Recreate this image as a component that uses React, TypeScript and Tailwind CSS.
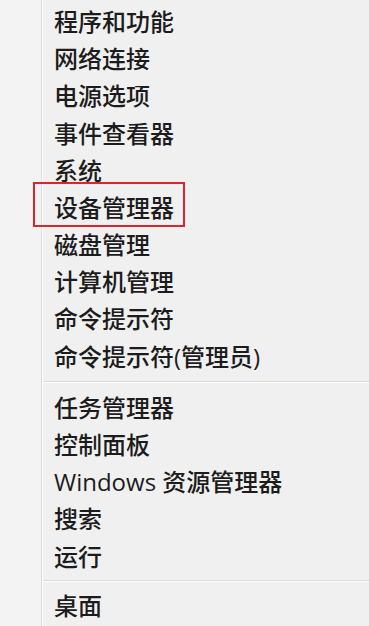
import React from "react";

const group1 = [
  "程序和功能",
  "网络连接",
  "电源选项",
  "事件查看器",
  "系统",
  "设备管理器",
  "磁盘管理",
  "计算机管理",
  "命令提示符",
  "命令提示符(管理员)",
];
const group2 = ["任务管理器", "控制面板", "Windows 资源管理器", "搜索", "运行"];
const group3 = ["桌面"];

function Row({ label, boxed }: { label: string; boxed?: boolean }) {
  return (
    <div className="relative flex h-[37.2px] items-center pl-[11px]">
      {boxed && (
        <div className="pointer-events-none absolute left-[-10px] top-[-7px] h-[45px] w-[152px] border-2 border-[#d8262c]" />
      )}
      <span className="whitespace-nowrap text-[24px] font-medium leading-none text-[#1c1c1c]">{label}</span>
    </div>
  );
}

function Separator({ h }: { h: string }) {
  return (
    <div className={`flex flex-col justify-center ${h}`}>
      <div className="h-px bg-[#d9d9d9]" />
      <div className="h-px bg-white" />
    </div>
  );
}

export default function App() {
  return (
    <div
      className="flex h-[626px] w-[369px] overflow-hidden bg-[#f0f0f0]"
      style={{ fontFamily: '"Open Sans", "Noto Sans CJK SC", sans-serif' }}
    >
      <div className="w-[41px] shrink-0 bg-[#f3f3f3]" />
      <div className="w-px shrink-0 bg-[#dcdcdc]" />
      <div className="w-px shrink-0 bg-white" />
      <div className="flex flex-1 flex-col pt-[3.4px]">
        {group1.map((l) => (
          <Row key={l} label={l} boxed={l === "设备管理器"} />
        ))}
        <Separator h="h-[14px]" />
        {group2.map((l) => (
          <Row key={l} label={l} />
        ))}
        <Separator h="h-[12px]" />
        {group3.map((l) => (
          <Row key={l} label={l} />
        ))}
      </div>
    </div>
  );
}
